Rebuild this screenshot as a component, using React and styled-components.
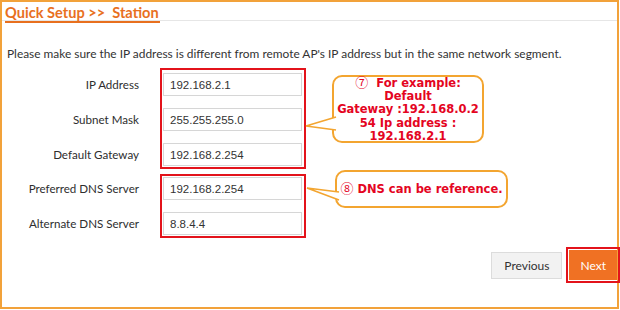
import React from 'react';
import styled, { createGlobalStyle } from 'styled-components';

const GlobalStyle = createGlobalStyle`
  html, body {
    margin: 0;
    padding: 0;
    background: #ffffff;
  }
  body {
    font-family: Lato, "Open Sans", sans-serif;
    color: #333333;
  }
`;

const Frame = styled.div`
  width: 619px;
  height: 309px;
  box-sizing: border-box;
  border: 2px solid #f2a23a;
  background: #ffffff;
  display: flex;
  flex-direction: column;
`;

const Header = styled.div`
  height: 18px;
  padding-left: 3px;
  border-bottom: 1px solid #e6e6e6;
`;

const Title = styled.span`
  display: inline-block;
  height: 16px;
  line-height: 16px;
  padding-right: 1px;
  border-bottom: 2px solid #e8701e;
  color: #e8701e;
  font-family: Lato, "Open Sans", sans-serif;
  font-weight: 700;
  font-size: 14.6px;
  white-space: pre;
`;

const Intro = styled.p`
  margin: 25px 0 0 5px;
  font-size: 11.9px;
  line-height: 16px;
  color: #333333;
`;

const Form = styled.div`
  margin-top: 6px;
  display: flex;
  flex-direction: column;
  gap: 5px;
`;

const Section = styled.div`
  display: flex;
  align-items: flex-start;
`;

const Labels = styled.div`
  width: 137px;
  margin-right: 21px;
  padding-top: ${({ $top }) => $top + 2}px;
  display: flex;
  flex-direction: column;
  gap: 12px;
`;

const Label = styled.div`
  height: 23px;
  line-height: 23px;
  text-align: right;
  font-size: 11.6px;
  color: #2e2e2e;
`;

const Highlight = styled.div`
  border: 2px solid #e3131b;
  padding: ${({ $top }) => $top}px 2px 1px 1px;
  display: flex;
  flex-direction: column;
  gap: 12px;
`;

const Field = styled.input`
  width: 139px;
  height: 23px;
  box-sizing: border-box;
  border: 1px solid #d6d6d6;
  padding: 0 6px;
  font-family: "Liberation Sans", Arial, sans-serif;
  font-size: 11.5px;
  color: #333333;
  background: #ffffff;
  outline: none;
`;

const Callout = styled.div`
  position: relative;
  margin-left: ${({ $left }) => $left}px;
  margin-top: ${({ $top }) => $top}px;
  width: ${({ $width }) => $width}px;
  height: ${({ $height }) => $height}px;
  box-sizing: border-box;
  border: 2px solid #f3a530;
  border-radius: 10px;
  background: #ffffff;
  display: flex;
  flex-direction: column;
  align-items: center;
  justify-content: center;
  color: #e4051f;
  font-family: "DejaVu Sans", Verdana, "Noto Sans CJK SC", sans-serif;
  font-weight: 700;
  font-size: 11.5px;
  line-height: 13.2px;
  text-align: center;
  white-space: pre;
`;

const Num = styled.span`
  font-family: "Noto Sans CJK SC", "DejaVu Sans", sans-serif;
  font-weight: 400;
  font-size: 13px;
  line-height: 13px;
`;

const Tail = styled.svg`
  position: absolute;
  left: ${({ $left }) => $left}px;
  top: ${({ $top }) => $top}px;
  overflow: visible;
`;

const Footer = styled.div`
  margin-top: 9px;
  display: flex;
  justify-content: flex-end;
  align-items: center;
  gap: 4px;
  margin-right: -3px;
`;

const Button = styled.button`
  height: ${({ $primary }) => ($primary ? 30 : 27)}px;
  padding: 0 ${({ $primary }) => ($primary ? 11 : 12)}px;
  border: ${({ $primary }) => ($primary ? 'none' : '1px solid #dcdcdc')};
  background: ${({ $primary }) => ($primary ? '#f07123' : '#f2f2f2')};
  color: ${({ $primary }) => ($primary ? '#ffffff' : '#333333')};
  font-family: Lato, "Open Sans", sans-serif;
  font-size: 12px;
  cursor: pointer;
`;

const ButtonMark = styled.div`
  border: 2px solid #e3131b;
  padding: 1px;
  display: flex;
`;

function CalloutTail({ left, top, points }) {
  const [tip, a, b] = points;
  return (
    <Tail $left={left} $top={top} width="34" height="20">
      <polygon points={`${tip} ${a} ${b}`} fill="#ffffff" />
      <polyline points={`${a} ${tip} ${b}`} fill="none" stroke="#f3a530" strokeWidth="1.6" />
    </Tail>
  );
}

function FieldGroup({ fields, top, children }) {
  return (
    <Section>
      <Labels $top={top}>
        {fields.map((f) => (
          <Label key={f.label}>{f.label}</Label>
        ))}
      </Labels>
      <Highlight $top={top}>
        {fields.map((f) => (
          <Field key={f.label} value={f.value} readOnly />
        ))}
      </Highlight>
      {children}
    </Section>
  );
}

const addressFields = [
  { label: 'IP Address', value: '192.168.2.1' },
  { label: 'Subnet Mask', value: '255.255.255.0' },
  { label: 'Default Gateway', value: '192.168.2.254' },
];

const dnsFields = [
  { label: 'Preferred DNS Server', value: '192.168.2.254' },
  { label: 'Alternate DNS Server', value: '8.8.4.4' },
];

export default function App() {
  return (
    <>
      <GlobalStyle />
      <Frame>
        <Header>
          <Title>{'Quick Setup >>  Station'}</Title>
        </Header>
        <Intro>
          Please make sure the IP address is different from remote AP's IP address but in the same network segment.
        </Intro>
        <Form>
          <FieldGroup fields={addressFields} top={3}>
            <Callout $left={26} $top={7} $width={152} $height={68}>
              <CalloutTail left={-29} top={37} points={['1,12', '31,3', '31,16']} />
              <span><Num>{'\u2466'}</Num>{'  For example:'}</span>
              {'Default\nGateway :192.168.0.2\n54 Ip address :\n192.168.2.1'}
            </Callout>
          </FieldGroup>
          <FieldGroup fields={dnsFields} top={1}>
            <Callout $left={29} $top={-4} $width={173} $height={38}>
              <CalloutTail left={-31} top={14} points={['1,2', '33,6', '33,14']} />
              <span><Num>{'\u2467'}</Num>{' DNS can be reference.'}</span>
            </Callout>
          </FieldGroup>
        </Form>
        <Footer>
          <Button>Previous</Button>
          <ButtonMark>
            <Button $primary>Next</Button>
          </ButtonMark>
        </Footer>
      </Frame>
    </>
  );
}
